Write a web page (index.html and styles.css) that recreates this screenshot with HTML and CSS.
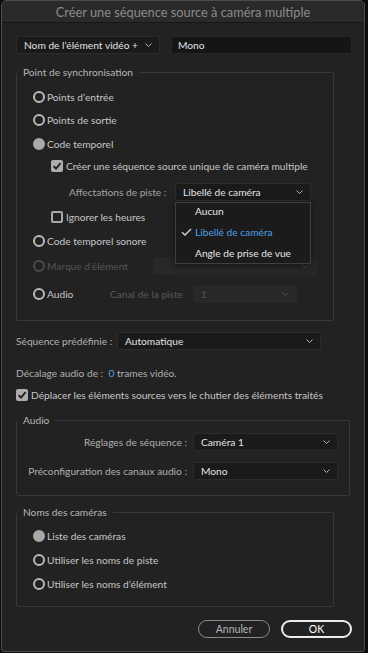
FILE: index.html
```html
<!DOCTYPE html>
<html lang="fr">
<head>
    <meta charset="UTF-8">
    <meta name="viewport" content="width=device-width, initial-scale=1.0">
    <title>Créer une séquence source à caméra multiple</title>
    <link rel="stylesheet" href="styles.css">
</head>
<body>
    <div class="window">
      <div class="titlebar">Créer une séquence source à caméra multiple</div>
      <div class="content">
        <div class="top-row">
          <div class="select select-name">
            <span>Nom de l’élément vidéo +</span>
            <svg class="chevron" width="7" height="4" viewBox="0 0 7 4"><path d="M0.5 0.5 L3.5 3.5 L6.5 0.5"/></svg>
          </div>
          <div class="text-input">Mono</div>
        </div>

        <fieldset class="group group-sync">
          <legend>Point de synchronisation</legend>
          <div class="row"><span class="radio"></span>Points d’entrée</div>
          <div class="row row-2"><span class="radio"></span>Points de sortie</div>
          <div class="row row-3"><span class="radio checked"></span>Code temporel</div>
          <div class="row row-4 indent">
            <span class="checkbox checked">
              <svg width="12" height="12" viewBox="0 0 12 12"><path d="M2.6 6.2 L5 8.6 L9.6 3.2"/></svg>
            </span>Créer une séquence source unique de caméra multiple
          </div>
          <div class="row row-5">
            <span class="label-track">Affectations de piste :</span>
            <div class="menu-anchor">
              <div class="select select-track">
                <span>Libellé de caméra</span>
                <svg class="chevron" width="7" height="4" viewBox="0 0 7 4"><path d="M0.5 0.5 L3.5 3.5 L6.5 0.5"/></svg>
              </div>
              <ul class="menu">
                <li>Aucun</li>
                <li class="selected">
                  <svg class="menu-check" width="11" height="8" viewBox="0 0 11 8"><path d="M1 4.2 L4 7 L10 1"/></svg>
                  Libellé de caméra
                </li>
                <li>Angle de prise de vue</li>
              </ul>
            </div>
          </div>
          <div class="row row-6 indent"><span class="checkbox"></span>Ignorer les heures</div>
          <div class="row row-7"><span class="radio"></span>Code temporel sonore</div>
          <div class="row row-8 disabled">
            <span class="radio"></span>
            <span class="label-marker">Marque d’élément</span>
            <div class="select select-marker">
              <span></span>
              <svg class="chevron" width="7" height="4" viewBox="0 0 7 4"><path d="M0.5 0.5 L3.5 3.5 L6.5 0.5"/></svg>
            </div>
          </div>
          <div class="row row-9">
            <span class="radio"></span>
            <span class="label-audio">Audio</span>
            <span class="label-channel">Canal de la piste</span>
            <div class="select select-channel disabled">
              <span>1</span>
              <svg class="chevron" width="7" height="4" viewBox="0 0 7 4"><path d="M0.5 0.5 L3.5 3.5 L6.5 0.5"/></svg>
            </div>
          </div>
        </fieldset>

        <div class="row row-preset">
          <span class="label-preset">Séquence prédéfinie :</span>
          <div class="select select-preset">
            <span>Automatique</span>
            <svg class="chevron" width="7" height="4" viewBox="0 0 7 4"><path d="M0.5 0.5 L3.5 3.5 L6.5 0.5"/></svg>
          </div>
        </div>
        <div class="row row-offset">Décalage audio de :&nbsp;&nbsp;<span class="value">0</span>&nbsp;trames vidéo.</div>
        <div class="row row-move">
          <span class="checkbox checked">
            <svg width="12" height="12" viewBox="0 0 12 12"><path d="M2.6 6.2 L5 8.6 L9.6 3.2"/></svg>
          </span>Déplacer les éléments sources vers le chutier des éléments traités
        </div>

        <fieldset class="group group-audio">
          <legend>Audio</legend>
          <div class="row">
            <span class="label-right">Réglages de séquence :</span>
            <div class="select select-audio">
              <span>Caméra 1</span>
              <svg class="chevron" width="7" height="4" viewBox="0 0 7 4"><path d="M0.5 0.5 L3.5 3.5 L6.5 0.5"/></svg>
            </div>
          </div>
          <div class="row row-channels">
            <span class="label-right">Préconfiguration des canaux audio :</span>
            <div class="select select-audio">
              <span>Mono</span>
              <svg class="chevron" width="7" height="4" viewBox="0 0 7 4"><path d="M0.5 0.5 L3.5 3.5 L6.5 0.5"/></svg>
            </div>
          </div>
        </fieldset>

        <fieldset class="group group-names">
          <legend>Noms des caméras</legend>
          <div class="row"><span class="radio checked"></span>Liste des caméras</div>
          <div class="row"><span class="radio"></span>Utiliser les noms de piste</div>
          <div class="row"><span class="radio"></span>Utiliser les noms d’élément</div>
        </fieldset>

        <div class="buttons">
          <button class="btn btn-cancel">Annuler</button>
          <button class="btn btn-ok">OK</button>
        </div>
      </div>
    </div>
</body>
</html>
```

FILE: styles.css
```css
* {
    box-sizing: border-box;
}

body {
    margin: 0;
    background: #0c0c0c;
    font-family: Lato, "Open Sans", sans-serif;
    font-size: 10.2px;
    color: #c6c6c6;
}

.window {
    width: 364px;
    height: 652px;
    margin-left: 1px;
    background: #222222;
    border: 1px solid #4b4b4b;
    border-radius: 5px 5px 3px 3px;
    overflow: hidden;
}

.titlebar {
    height: 22px;
    line-height: 22px;
    text-align: center;
    font-size: 12.8px;
    color: #8a8a8a;
    background: #2a2a2a;
    border-bottom: 1px solid #161616;
}

.content {
    padding: 13px 12px 0 14px;
}

.top-row {
    display: flex;
    gap: 11px;
    height: 18px;
}

.select {
    display: flex;
    align-items: center;
    justify-content: space-between;
    height: 18px;
    padding: 0 7px 0 7px;
    background: #1a1a1a;
    border: 1px solid #2b2b2b;
    border-radius: 2px;
    color: #e2e2e2;
    white-space: nowrap;
}

.chevron {
    flex: none;
    fill: none;
    stroke: #b4b4b4;
    stroke-width: 1;
}

.select-name {
    width: 144px;
}

.text-input {
    flex: 1;
    height: 18px;
    line-height: 16px;
    padding: 0 6px;
    background: #151515;
    border: 1px solid #262626;
    color: #e2e2e2;
}

/* groups */
.group {
    margin: 11px 0 0 0;
    padding: 6px 0 14px 16px;
    border: 1px solid #383838;
    border-radius: 2px;
    min-inline-size: 0;
}

.group legend {
    padding: 0 6px;
    margin-left: -16px;
    line-height: 14px;
    color: #b6b6b6;
}

.group-sync {
    width: 318px;
}

.group-audio {
    margin-top: 6px;
    padding: 3px 0 12px 0;
    width: 334px;
}

.group-audio legend {
    margin-left: 0;
}

.group-names {
    margin-top: 9px;
    padding: 5px 0 10px 16px;
    width: 318px;
}

.row {
    display: flex;
    align-items: center;
    height: 24px;
    white-space: nowrap;
}

.row-2 { margin-top: -1px; }
.row-3 { margin-top: 0; }
.row-4 { margin-top: -2px; }
.row-5 { margin-top: 2px; }
.row-6 { margin-top: 1px; }
.row-7 { margin-top: 0; }
.row-8 { margin-top: 1px; }
.row-9 { margin-top: 4px; }

.indent {
    padding-left: 18px;
}

.radio {
    flex: none;
    width: 12px;
    height: 12px;
    margin-right: 2px;
    border: 2px solid #b9b9b9;
    border-radius: 50%;
}

.radio.checked {
    background: #a9a9a9;
    border-color: #a9a9a9;
}

.checkbox {
    flex: none;
    display: flex;
    width: 12px;
    height: 12px;
    margin-right: 3px;
    border: 2px solid #a8a8a8;
    border-radius: 2px;
}

.checkbox.checked {
    background: #adadad;
    border: none;
}

.checkbox svg {
    fill: none;
    stroke: #1e1e1e;
    stroke-width: 1.8;
}

.label-track {
    width: 133px;
    padding-left: 36px;
    text-align: right;
    color: #a4a4a4;
}

.menu-anchor {
    position: relative;
    margin-left: 9px;
}

.select-track {
    width: 136px;
}

.menu {
    position: absolute;
    top: 19px;
    left: 0;
    z-index: 2;
    width: 136px;
    height: 62px;
    margin: 0;
    padding: 0;
    list-style: none;
    background: #1b1b1b;
    border: 1px solid #3e3e3e;
    box-shadow: 0 2px 6px rgba(0, 0, 0, 0.5);
}

.menu li {
    position: relative;
    height: 21px;
    line-height: 16px;
    padding-left: 19px;
    color: #e6e6e6;
}

.menu li.selected {
    color: #4e9fe6;
}

.menu-check {
    position: absolute;
    left: 5px;
    top: 4px;
    fill: none;
    stroke: #d0d0d0;
    stroke-width: 1.4;
}

.disabled {
    color: #555555;
}

.disabled .radio {
    border-color: #4a4a4a;
}

.label-marker {
    width: 106px;
}

.select-marker,
.select-channel {
    background: #282828;
    border-color: #282828;
    color: #565656;
}

.select-marker {
    width: 164px;
}

.select-marker .chevron,
.select-channel .chevron {
    stroke: #4e4e4e;
}

.label-audio {
    width: 63px;
}

.label-channel {
    width: 83px;
    color: #585858;
}

.select-channel {
    width: 104px;
}

.row-preset {
    margin-top: 8px;
}

.label-preset {
    width: 101px;
    color: #b0b0b0;
}

.select-preset {
    width: 204px;
}

.row-offset {
    margin-top: 8px;
    color: #b0b0b0;
}

.value {
    color: #4f9fe6;
}

.row-move {
    margin-top: -2px;
}

.label-right {
    width: 176px;
    padding-right: 6px;
    text-align: right;
    color: #b0b0b0;
}

.select-audio {
    width: 145px;
}

.row-channels {
    margin-top: 5px;
}

/* buttons */
.buttons {
    display: flex;
    justify-content: flex-end;
    gap: 11px;
    margin-top: 13px;
}

.btn {
    height: 18px;
    padding: 0;
    font-family: inherit;
    font-size: 10.5px;
    background: transparent;
    border-radius: 9px;
    cursor: pointer;
}

.btn-cancel {
    width: 72px;
    border: 1.5px solid #8a8a8a;
    color: #b4b4b4;
}

.btn-ok {
    width: 71px;
    border: 2px solid #ececec;
    color: #ffffff;
}
```
